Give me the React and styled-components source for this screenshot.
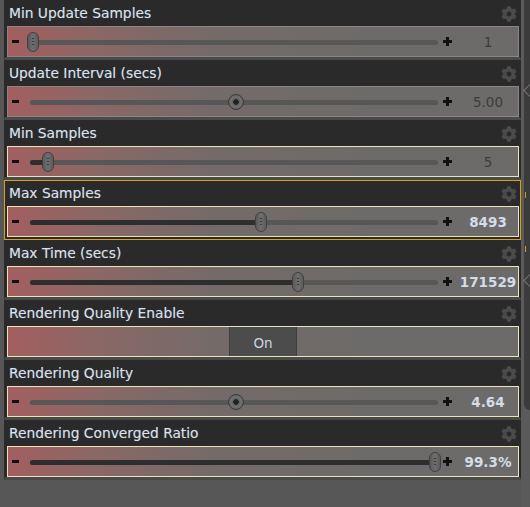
import React from 'react'
import styled, { createGlobalStyle } from 'styled-components'
import { FaCog } from 'react-icons/fa'

const GlobalStyle = createGlobalStyle`
  html, body { margin: 0; padding: 0; background: #575757; }
  body { font-family: "DejaVu Sans", Verdana, sans-serif; overflow: hidden; }
`

const params = [
  { label: 'Min Update Samples', value: '1', pos: 0.7, knob: 'oval' },
  { label: 'Update Interval (secs)', value: '5.00', pos: 50.6, knob: 'dot' },
  { label: 'Min Samples', value: '5', pos: 4.4, knob: 'oval', lit: true },
  { label: 'Max Samples', value: '8493', pos: 56.5, knob: 'oval', lit: true, bold: true, selected: true },
  { label: 'Max Time (secs)', value: '171529', pos: 65.8, knob: 'oval', lit: true, bold: true },
  { label: 'Rendering Quality Enable', toggle: 'On', lit: true },
  { label: 'Rendering Quality', value: '4.64', pos: 50.6, knob: 'dot', lit: true, bold: true },
  { label: 'Rendering Converged Ratio', value: '99.3%', pos: 99.3, knob: 'oval', lit: true, bold: true },
]

function Param({ p }) {
  return (
    <Row $selected={p.selected}>
      <Header>
        <Label>{p.label}</Label>
        <Gear><FaCog /></Gear>
      </Header>
      {p.toggle ? (
        <SliderBox $lit={p.lit}>
          <ToggleWrap>
            <ToggleBtn>{p.toggle}</ToggleBtn>
          </ToggleWrap>
        </SliderBox>
      ) : (
        <SliderBox $lit={p.lit}>
          <Minus />
          <Track>
            <Line />
            {p.knob === 'oval' && <Fill style={{ width: p.pos + '%' }} />}
            {p.knob === 'oval'
              ? <OvalKnob style={{ left: p.pos + '%' }} />
              : <DotKnob style={{ left: p.pos + '%' }} />}
          </Track>
          <Plus />
          <Value $bold={p.bold}>{p.value}</Value>
        </SliderBox>
      )}
    </Row>
  )
}

function App() {
  return (
    <Page>
      <GlobalStyle />
      <Panel>
        {params.map((p) => <Param key={p.label} p={p} />)}
      </Panel>
      <Side>
        <SideDark>
          <Chevron style={{ top: 86 }} />
          <Chevron style={{ top: 276 }} />
          <Mark style={{ top: 192 }} />
          <Mark style={{ top: 246 }} />
        </SideDark>
      </Side>
    </Page>
  )
}

const Page = styled.div`
  display: flex;
  width: 530px;
  height: 507px;
  padding-left: 4px;
  box-sizing: border-box;
  background: #575757;
`

const Panel = styled.div`
  width: 517px;
  display: flex;
  flex-direction: column;
`

const Row = styled.div`
  box-sizing: border-box;
  height: 60px;
  background: #2a2a2a;
  border: 1px solid ${(p) => (p.$selected ? '#d6a21c' : '#2a2a2a')};
  border-bottom: ${(p) => (p.$selected ? '1px solid #d6a21c' : '3px solid #4a4a4a')};
  padding: 1px 1px 0 2px;
`

const Header = styled.div`
  display: flex;
  align-items: center;
  justify-content: space-between;
  height: 22px;
  padding: 0 2px 0 2px;
`

const Label = styled.div`
  color: #dce1e7;
  font-size: 13.8px;
  text-shadow: 0 0 1px rgba(140, 170, 220, 0.5);
`

const Gear = styled.div`
  display: flex;
  color: #4b4b4b;
  font-size: 16px;
  margin-top: 1px;
`

const SliderBox = styled.div`
  box-sizing: border-box;
  margin-top: 2px;
  height: 31px;
  display: flex;
  align-items: center;
  border: 1px solid ${(p) => (p.$lit ? '#e9e4b8' : '#8d8585')};
  background: linear-gradient(to right, #a35e5f 0%, #8a6866 18%, #746b69 40%, #6d6b69 70%, #6c6b6a 100%);
`

const Minus = styled.div`
  width: 7px;
  height: 3px;
  background: #111;
  margin: 0 11px 0 4px;
  flex-shrink: 0;
`

const Track = styled.div`
  position: relative;
  flex: 1;
  height: 100%;
`

const Line = styled.div`
  position: absolute;
  left: 0;
  right: 0;
  top: 50%;
  height: 5px;
  margin-top: -2px;
  border-radius: 3px;
  background: #575757;
`

const Fill = styled.div`
  position: absolute;
  left: 0;
  top: 50%;
  height: 5px;
  margin-top: -2px;
  border-radius: 3px;
  background: #2e2e2e;
`

const OvalKnob = styled.div`
  position: absolute;
  top: 50%;
  width: 12px;
  height: 20px;
  transform: translate(-50%, -50%);
  border-radius: 6px;
  box-sizing: border-box;
  border: 1px solid #404040;
  background: linear-gradient(to right, #5a5a5a, #6e6e6e 50%, #5c5c5c);
  &::after {
    content: '';
    position: absolute;
    left: 4px;
    top: 5px;
    width: 2px;
    height: 8px;
    background: repeating-linear-gradient(#3a3a3a 0 1px, transparent 1px 3px);
  }
`

const DotKnob = styled.div`
  position: absolute;
  top: 50%;
  width: 16px;
  height: 16px;
  transform: translate(-50%, -50%);
  border-radius: 50%;
  box-sizing: border-box;
  border: 1px solid #3c3c3c;
  background: radial-gradient(circle, #222 0 2.5px, #5e5e5e 3px, #727272 5px, #5a5a5a 8px);
`

const Plus = styled.div`
  position: relative;
  width: 9px;
  height: 9px;
  margin: 0 6px 0 5px;
  flex-shrink: 0;
  &::before, &::after {
    content: '';
    position: absolute;
    background: #111;
  }
  &::before { left: 0; top: 3px; width: 9px; height: 3px; }
  &::after { left: 3px; top: 0; width: 3px; height: 9px; }
`

const Value = styled.div`
  width: 60px;
  flex-shrink: 0;
  text-align: center;
  font-size: 13.5px;
  font-weight: ${(p) => (p.$bold ? 'bold' : 'normal')};
  color: ${(p) => (p.$bold ? '#d4dce8' : '#3b3b3b')};
`

const ToggleWrap = styled.div`
  flex: 1;
  height: 100%;
  display: flex;
  justify-content: center;
`

const ToggleBtn = styled.div`
  width: 68px;
  height: 100%;
  box-sizing: border-box;
  display: flex;
  align-items: center;
  justify-content: center;
  padding-top: 3px;
  background: #4c4c4c;
  border-left: 1px solid #3e3e3e;
  border-right: 1px solid #3e3e3e;
  color: #cdd6e0;
  font-size: 13.5px;
`

const Side = styled.div`
  width: 9px;
  height: 100%;
  padding-left: 3px;
  box-sizing: border-box;
  background: #5a5a5a;
`

const SideDark = styled.div`
  position: relative;
  height: 410px;
  background: #3b3b3b;
  border-bottom-left-radius: 6px;
`

const Chevron = styled.div`
  position: absolute;
  left: 1px;
  width: 8px;
  height: 8px;
  border-left: 1px solid #777;
  border-bottom: 1px solid #777;
  transform: rotate(45deg);
`

const Mark = styled.div`
  position: absolute;
  left: 1px;
  width: 3px;
  height: 6px;
  border-left: 1px solid #c9a020;
`

export default App
